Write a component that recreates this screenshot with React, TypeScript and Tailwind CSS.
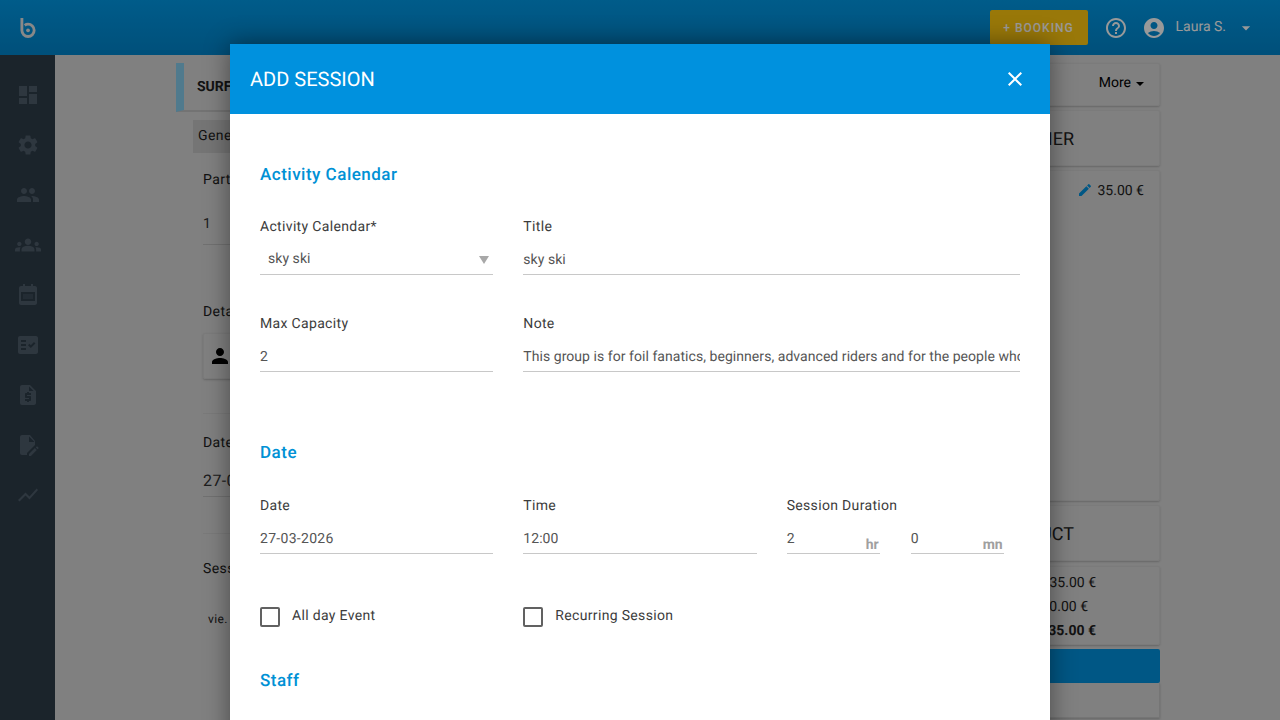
import type { ReactNode } from 'react'
import { MdAccountCircle, MdArrowDropDown, MdClose, MdDashboard, MdEdit, MdFactCheck, MdGroups, MdHelpOutline, MdPeople, MdPerson, MdRequestQuote, MdSettings, MdShowChart } from 'react-icons/md'

function EditDocIcon() {
  return (
    <svg viewBox="0 0 24 24" className="size-6 fill-[#4e5c69]">
      <path d="M14 2H6c-1.1 0-2 .9-2 2v16c0 1.1.9 2 2 2h5v-2.1l8-8V8l-5-6zm-1 7V3.5L18.5 9H13z" />
      <path d="M22.4 14.6l-1-1a.6.6 0 0 0-.8 0l-.8.8 1.8 1.8.8-.8a.6.6 0 0 0 0-.8zM13 21v1.9h1.9l5.9-5.9-1.9-1.9L13 21z" />
    </svg>
  )
}

function CalendarIcon() {
  return (
    <svg viewBox="0 0 24 24" className="size-6 fill-[#4e5c69]">
      <path fillRule="evenodd" d="M7 1h2v2h6V1h2v2h2c1.1 0 2 .9 2 2v15c0 1.1-.9 2-2 2H5c-1.1 0-2-.9-2-2V5c0-1.1.9-2 2-2h2V1zM5 9v9h14V9H5z" />
      <path d="M7 11h10v5H7z" opacity="0.45" />
    </svg>
  )
}

function NavIcon({ children }: { children: ReactNode }) {
  return <div className="flex h-[50px] items-center justify-center text-[#4e5c69]">{children}</div>
}

function Sidebar() {
  return (
    <aside className="w-[55px] shrink-0 bg-[#2d3c49] pt-[15px]">
      <NavIcon><MdDashboard size={24} /></NavIcon>
      <NavIcon><MdSettings size={24} /></NavIcon>
      <NavIcon><MdPeople size={24} /></NavIcon>
      <NavIcon><MdGroups size={26} /></NavIcon>
      <NavIcon><CalendarIcon /></NavIcon>
      <NavIcon><MdFactCheck size={24} /></NavIcon>
      <NavIcon><MdRequestQuote size={24} /></NavIcon>
      <NavIcon><EditDocIcon /></NavIcon>
      <NavIcon><MdShowChart size={24} /></NavIcon>
    </aside>
  )
}

function TopBar() {
  return (
    <header className="flex h-[55px] shrink-0 items-center bg-linear-to-b from-[#0099e6] to-[#0085cc] pl-[20px] pr-[24px]">
      <svg viewBox="0 0 18 22" className="h-[21px] w-[17px] fill-none stroke-[#e3e3e3] stroke-[3]">
        <path d="M2 1v13a6.5 6.5 0 1 0 6.5-6.5c-1.5 0-2.5.4-3.5 1.2" />
        <circle cx="8.5" cy="14" r="2" className="fill-[#e3e3e3] stroke-none" />
      </svg>
      <button className="ml-auto flex h-[35px] w-[98px] items-center justify-center rounded-[2px] bg-[#ffc90f] text-[12px] font-medium tracking-[1px] text-white">
        + BOOKING
      </button>
      <MdHelpOutline size={24} className="ml-[16px] text-white" />
      <MdAccountCircle size={24} className="ml-[14px] text-white" />
      <span className="ml-[10px] text-[14px] text-white">Laura S.</span>
      <MdArrowDropDown size={20} className="ml-[10px] text-white" />
    </header>
  )
}

function LeftColumn() {
  return (
    <div className="w-[640px] text-[14px] tracking-[0.4px] text-[#212121]">
      <div className="flex h-[49px] items-center border-b-2 border-l-[8px] border-b-[#c0c0c0] border-l-[#86cbeb] pl-[13px] pt-[2px] text-[14px] font-bold tracking-normal">
        SURF
      </div>
      <div className="ml-[17px] mt-[8px] flex h-[33px] w-[200px] items-center bg-[#c4c4c4] px-[5px]">General</div>
      <div className="pl-[27px]">
        <p className="mt-[19px] leading-[16px]">Participants</p>
        <p className="mt-[28px] leading-[16px] text-[#333]">1</p>
        <div className="mt-[12px] h-px w-[300px] bg-[#bdbdbd]" />
        <p className="mt-[59px] leading-[16px]">Details</p>
        <div className="mt-[13px] flex h-[46px] w-[300px] items-center rounded-[2px] border border-[#cdcdcd] pl-[4px] shadow-[0_1px_2px_rgba(0,0,0,0.2)]">
          <MdPerson size={24} className="text-black" />
        </div>
        <div className="mt-[34px] h-px w-[300px] bg-[#cccccc]" />
        <p className="mt-[21px] leading-[16px]">Date</p>
        <p className="mt-[22px] text-[16px] leading-[16px] text-[#333]">27-03-2026</p>
        <div className="mt-[7px] h-px w-[300px] bg-[#bdbdbd]" />
        <div className="mt-[36px] h-px w-[300px] bg-[#cccccc]" />
        <p className="mt-[27px] leading-[16px]">Sessions</p>
        <p className="ml-[5px] mt-[35px] text-[12px] leading-[14px]">vie. 27</p>
      </div>
    </div>
  )
}

function SideCard({ className, children }: { className: string; children?: ReactNode }) {
  return <div className={`rounded-[2px] border border-[#cdcdcd] shadow-[0_1px_2px_rgba(0,0,0,0.2)] ${className}`}>{children}</div>
}

function RightColumn() {
  return (
    <div className="ml-auto flex w-[300px] flex-col gap-[4px] text-[#212121]">
      <SideCard className="flex h-[43px] items-center justify-end pb-[2px] pr-[15px] text-[14px] text-black">
        More
        <span className="ml-[5px] mt-[1px] border-x-[4px] border-t-[4px] border-x-transparent border-t-black" />
      </SideCard>
      <SideCard className="flex h-[56px] items-center justify-end pr-[85px] pt-[2px] text-[18px]">CASHIER</SideCard>
      <SideCard className="flex h-[331px] items-start justify-end pr-[15px] pt-[10px] text-[14px]">
        <MdEdit size={16} className="mr-[4px] mt-[1px] text-[#0091de]" />
        35.00 €
      </SideCard>
      <SideCard className="flex h-[56px] items-center justify-end pr-[85px] pt-[2px] text-[18px]">PRODUCT</SideCard>
      <SideCard className="mt-[1px] flex h-[79px] flex-col items-end justify-center pr-[63px] pt-[2px] text-[14px] leading-[24px]">
        <span>135.00 €</span>
        <span className="mr-[8px]">0.00 €</span>
        <span className="font-bold">135.00 €</span>
      </SideCard>
      <div className="h-[34px] rounded-[2px] bg-[#0091de]" />
      <div className="-mt-[4px] h-[35px] border-b border-r border-[#c4c4c4] shadow-[0_1px_2px_rgba(0,0,0,0.2)]" />
    </div>
  )
}

function Field({ label, value, select, wide, className = '' }: { label: string; value: string; select?: boolean; wide?: boolean; className?: string }) {
  return (
    <div className={className}>
      <label className="block text-[14px] leading-[18px] tracking-[0.33px] text-[#3c3c3c]">{label}</label>
      <div className={`mt-[5px] flex h-[34px] items-center border-b border-[#c8c8c8] text-[14px] text-[#555] ${wide ? 'tracking-[0.3px]' : 'tracking-[0.05px]'} ${select ? 'pl-[8px] pr-[4px] pt-[4px]' : 'pt-[6px]'}`}>
        <span className="overflow-hidden whitespace-nowrap">{value}</span>
        {select && <span className="ml-auto border-x-[5px] border-t-[8px] border-x-transparent border-t-[#a8a8a8]" />}
      </div>
    </div>
  )
}

function DurationField({ value, unit }: { value: string; unit: string }) {
  return (
    <div className="flex h-[34px] w-[93px] items-center justify-between border-b border-[#c8c8c8] pt-[6px] text-[14px] text-[#555]">
      <span>{value}</span>
      <span className="mr-[1px] mt-[11px] text-[14px] font-bold text-[#a0a0a0]">{unit}</span>
    </div>
  )
}

function CheckRow({ label }: { label: string }) {
  return (
    <label className="flex items-center gap-[12px] text-[14px] tracking-[0.33px] text-[#3c3c3c]">
      <span className="size-[20px] rounded-[2px] border-2 border-[#616161]" />
      {label}
    </label>
  )
}

function SectionTitle({ children, className = '' }: { children: ReactNode; className?: string }) {
  return <h2 className={`text-[17px] font-medium leading-[20px] tracking-[0.5px] text-[#0091d5] ${className}`}>{children}</h2>
}

function SessionModal() {
  return (
    <div className="absolute left-[230px] top-[44px] w-[820px] bg-white shadow-[0_0_24px_rgba(0,0,0,0.45)]">
      <div className="flex h-[70px] items-center justify-between bg-[#0091de] pl-[20px] pr-[23px] text-white">
        <h1 className="text-[20px] font-normal">ADD SESSION</h1>
        <MdClose size={24} />
      </div>
      <div className="px-[30px] pb-[60px] pt-[51px]">
        <SectionTitle>Activity Calendar</SectionTitle>
        <div className="mt-[33px] grid grid-cols-3 gap-x-[30px] gap-y-[40px]">
          <Field label="Activity Calendar*" value="sky ski" select />
          <Field label="Title" value="sky ski" className="col-span-2" />
          <Field label="Max Capacity" value="2" />
          <Field label="Note" value="This group is for foil fanatics, beginners, advanced riders and for the people who want to try" className="col-span-2" />
        </div>
        <SectionTitle className="mt-[71px]">Date</SectionTitle>
        <div className="mt-[34px] grid grid-cols-3 gap-x-[30px]">
          <Field label="Date" value="27-03-2026" wide />
          <Field label="Time" value="12:00" />
          <div>
            <label className="block text-[14px] leading-[18px] tracking-[0.33px] text-[#3c3c3c]">Session Duration</label>
            <div className="mt-[5px] flex gap-[31px]">
              <DurationField value="2" unit="hr" />
              <DurationField value="0" unit="mn" />
            </div>
          </div>
        </div>
        <div className="mt-[52px] grid grid-cols-3 gap-x-[30px]">
          <CheckRow label="All day Event" />
          <CheckRow label="Recurring Session" />
        </div>
        <SectionTitle className="mt-[44px]">Staff</SectionTitle>
      </div>
    </div>
  )
}

export default function App() {
  return (
    <div className="relative flex h-screen flex-col overflow-hidden bg-[#d5d5d5] font-['Roboto',sans-serif] [text-rendering:geometricPrecision]">
      <TopBar />
      <div className="flex min-h-0 flex-1">
        <Sidebar />
        <main className="flex flex-1 pl-[121px] pr-[120px] pt-[8px]">
          <LeftColumn />
          <RightColumn />
        </main>
      </div>
      <div className="absolute inset-0 bg-black/40" />
      <SessionModal />
    </div>
  )
}
